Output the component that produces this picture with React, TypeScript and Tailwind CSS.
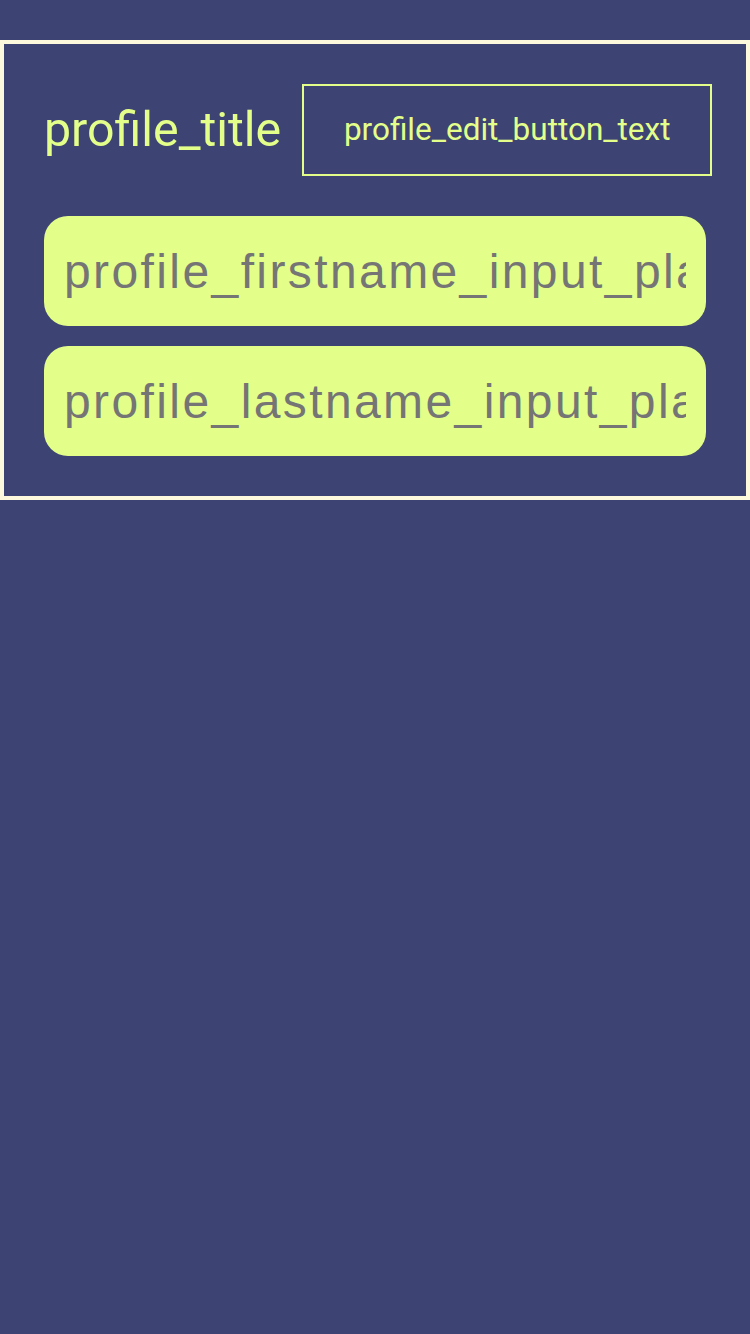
export default function App() {
  return (
    <div className="min-h-[1334px] w-full bg-[#3d4373] pt-[40px]">
      <div className="border-4 border-[#fcf9dc] px-[40px] pt-[40px] pb-[40px]">
        <div className="flex items-center">
          <h1 className="shrink-0 font-['Roboto',sans-serif] text-[48.3px] leading-none text-[#e3ff8a]">
            profile_title
          </h1>
          <button className="ml-[21px] flex h-[92px] w-[410px] shrink-0 items-center justify-center border-2 border-[#e3ff8a] font-['Roboto',sans-serif] text-[31.5px] text-[#e3ff8a]">
            profile_edit_button_text
          </button>
        </div>
        <div className="mt-[40px] flex flex-col gap-[20px]">
          <input
            readOnly
            placeholder="profile_firstname_input_placeholder"
            className="h-[110px] w-full rounded-[24px] bg-[#e3ff8a] px-[20px] font-['Liberation_Sans',sans-serif] text-[48px] tracking-[0.05em] text-[#757575] outline-none placeholder:text-[#757575]"
          />
          <input
            readOnly
            placeholder="profile_lastname_input_placeholder"
            className="h-[110px] w-full rounded-[24px] bg-[#e3ff8a] px-[20px] font-['Liberation_Sans',sans-serif] text-[48px] tracking-[0.05em] text-[#757575] outline-none placeholder:text-[#757575]"
          />
        </div>
      </div>
    </div>
  );
}
